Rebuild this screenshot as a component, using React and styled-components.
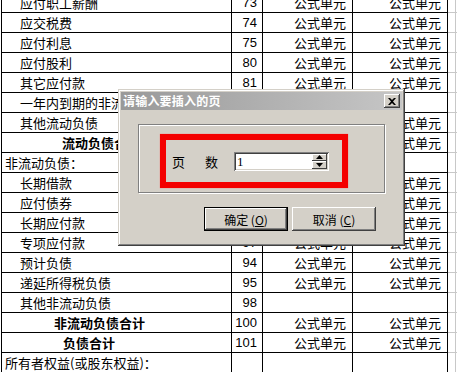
import React from 'react';
import styled, { createGlobalStyle } from 'styled-components';

const GlobalStyle = createGlobalStyle`
  html, body {
    margin: 0;
    padding: 0;
    background: #fff;
    overflow: hidden;
  }
  body {
    font-family: "Noto Sans CJK SC", "Liberation Sans", sans-serif;
    color: #000;
  }
`;

const rows = [
  { label: '应付职工薪酬', indent: 18, no: '73', a: true, b: true },
  { label: '应交税费', indent: 18, no: '74', a: true, b: true },
  { label: '应付利息', indent: 18, no: '75', a: true, b: true },
  { label: '应付股利', indent: 18, no: '80', a: true, b: true },
  { label: '其它应付款', indent: 18, no: '81', a: true, b: true },
  { label: '一年内到期的非流动负债', indent: 18, no: '86', a: false, b: false },
  { label: '其他流动负债', indent: 18, no: '90', a: true, b: true },
  { label: '流动负债合计', indent: 60, no: '91', a: true, b: true, bold: true },
  { label: '非流动负债：', indent: 3, no: '', a: false, b: false },
  { label: '长期借款', indent: 18, no: '92', a: true, b: true },
  { label: '应付债券', indent: 18, no: '93', a: true, b: true },
  { label: '长期应付款', indent: 18, no: '96', a: true, b: true },
  { label: '专项应付款', indent: 18, no: '97', a: true, b: true },
  { label: '预计负债', indent: 18, no: '94', a: true, b: true },
  { label: '递延所得税负债', indent: 18, no: '95', a: true, b: true },
  { label: '其他非流动负债', indent: 18, no: '98', a: false, b: false },
  { label: '非流动负债合计', indent: 52, no: '100', a: true, b: true, bold: true },
  { label: '负债合计', indent: 61, no: '101', a: true, b: true, bold: true },
  { label: '所有者权益(或股东权益)：', indent: 3, no: '', a: false, b: false },
];

function App() {
  return (
    <>
      <GlobalStyle />
      <Screen>
        <Sheet>
          {rows.map((r, i) => (
            <Row key={i}>
              <LabelCell $indent={r.indent} $bold={r.bold}>{r.label}</LabelCell>
              <NumCell>{r.no}</NumCell>
              <ValueCell>{r.a ? '公式单元' : ''}</ValueCell>
              <ValueCell>{r.b ? '公式单元' : ''}</ValueCell>
              <GridCell />
              <GridCell $last />
            </Row>
          ))}
        </Sheet>

        <Dialog>
          <TitleBar>
            <TitleText>请输入要插入的页</TitleText>
            <CloseButton>
              <svg width="8" height="7" viewBox="0 0 8 7">
                <path d="M0 0h2l2 2 2-2h2L5 3.5 8 7H6L4 5 2 7H0l3-3.5z" fill="#000" />
              </svg>
            </CloseButton>
          </TitleBar>

          <GroupBox>
            <Highlight>
              <FieldLabel>
                <span>页</span>
                <span>数</span>
              </FieldLabel>
              <SpinInput>
                <InputText>1</InputText>
                <Spinner>
                  <SpinButton>
                    <svg width="7" height="4" viewBox="0 0 7 4">
                      <path d="M3.5 0L7 4H0z" fill="#000" />
                    </svg>
                  </SpinButton>
                  <SpinButton>
                    <svg width="7" height="4" viewBox="0 0 7 4">
                      <path d="M0 0h7L3.5 4z" fill="#000" />
                    </svg>
                  </SpinButton>
                </Spinner>
              </SpinInput>
            </Highlight>
          </GroupBox>

          <ButtonRow>
            <PushButton $default>确定 (<u>O</u>)</PushButton>
            <PushButton>取消 (<u>C</u>)</PushButton>
          </ButtonRow>
        </Dialog>
      </Screen>
    </>
  );
}

const Screen = styled.div`
  position: relative;
  width: 457px;
  height: 372px;
  overflow: hidden;
  background: #fff;
`;

const Sheet = styled.div`
  margin-top: -7px;
  margin-left: 1px;
  border-left: 1px solid #000;
`;

const Row = styled.div`
  display: grid;
  grid-template-columns: 230px 31px 90px 95px 8px 1fr;
  height: 20px;
`;

const Cell = styled.div`
  box-sizing: border-box;
  height: 20px;
  border-right: 1px solid #000;
  border-bottom: 1px solid #000;
  font-size: 13px;
  line-height: 19px;
  white-space: nowrap;
  overflow: hidden;
`;

const LabelCell = styled(Cell)`
  padding-left: ${p => p.$indent}px;
  font-weight: ${p => (p.$bold ? 700 : 400)};
`;

const NumCell = styled(Cell)`
  text-align: right;
  padding-right: 5px;
  font-family: "Liberation Sans", sans-serif;
  font-size: 13px;
`;

const ValueCell = styled(Cell)`
  text-align: right;
  padding-right: 6px;
`;

const GridCell = styled(Cell)`
  border-bottom-color: #c8c8c8;
  border-right: ${p => (p.$last ? 'none' : '1px solid #c8c8c8')};
`;

const Dialog = styled.div`
  position: absolute;
  left: 118px;
  top: 89px;
  width: 287px;
  height: 157px;
  box-sizing: border-box;
  padding: 3px;
  background: #d4d0c8;
  box-shadow:
    inset -1px -1px #404040,
    inset 1px 1px #d4d0c8,
    inset -2px -2px #808080,
    inset 2px 2px #fff;
`;

const TitleBar = styled.div`
  display: flex;
  align-items: center;
  justify-content: space-between;
  height: 18px;
  padding: 0 2px;
  background: linear-gradient(to right, #999999, #c6c6c6);
`;

const TitleText = styled.span`
  color: #fff;
  font-size: 12px;
  font-weight: 700;
  line-height: 18px;
  letter-spacing: 0.2px;
`;

const CloseButton = styled.div`
  display: flex;
  align-items: center;
  justify-content: center;
  width: 16px;
  height: 14px;
  box-sizing: border-box;
  background: #d4d0c8;
  box-shadow:
    inset -1px -1px #404040,
    inset 1px 1px #fff,
    inset -2px -2px #808080;
`;

const GroupBox = styled.div`
  box-sizing: border-box;
  width: 247px;
  height: 69px;
  margin: 14px 0 0 17px;
  padding: 9px 0 0 21px;
  border: 1px solid #808080;
  box-shadow: inset 1px 1px #fff, 1px 1px #fff;
`;

const Highlight = styled.div`
  display: flex;
  align-items: center;
  box-sizing: border-box;
  width: 188px;
  height: 54px;
  padding-left: 6px;
  border: 6px solid #f40000;
  box-shadow: 0 0 1px #ff6060;
`;

const FieldLabel = styled.div`
  display: flex;
  gap: 20px;
  font-size: 13px;
  margin-right: 16px;
`;

const SpinInput = styled.div`
  display: flex;
  box-sizing: border-box;
  width: 95px;
  height: 19px;
  padding: 2px;
  background: #fff;
  box-shadow:
    inset 1px 1px #808080,
    inset -1px -1px #fff,
    inset 2px 2px #404040,
    inset -2px -2px #d4d0c8;
`;

const InputText = styled.span`
  flex: 1;
  font-family: "Liberation Serif", serif;
  font-size: 13px;
  line-height: 15px;
  padding-left: 1px;
`;

const Spinner = styled.div`
  display: flex;
  flex-direction: column;
  width: 15px;
`;

const SpinButton = styled.div`
  flex: 1;
  display: flex;
  align-items: center;
  justify-content: center;
  background: #d4d0c8;
  box-shadow:
    inset -1px -1px #404040,
    inset 1px 1px #fff;
`;

const ButtonRow = styled.div`
  display: flex;
  justify-content: flex-end;
  gap: 4px;
  width: 247px;
  margin: 14px 0 0 17px;
  padding-right: 9px;
  box-sizing: border-box;
`;

const PushButton = styled.div`
  display: flex;
  align-items: center;
  justify-content: center;
  box-sizing: border-box;
  width: 84px;
  height: 24px;
  font-size: 12px;
  background: #d4d0c8;
  border: ${p => (p.$default ? '1px solid #000' : '0')};
  box-shadow:
    inset -1px -1px #404040,
    inset 1px 1px #fff,
    inset -2px -2px #808080;

  u {
    text-decoration: underline;
  }
`;

export default App;
